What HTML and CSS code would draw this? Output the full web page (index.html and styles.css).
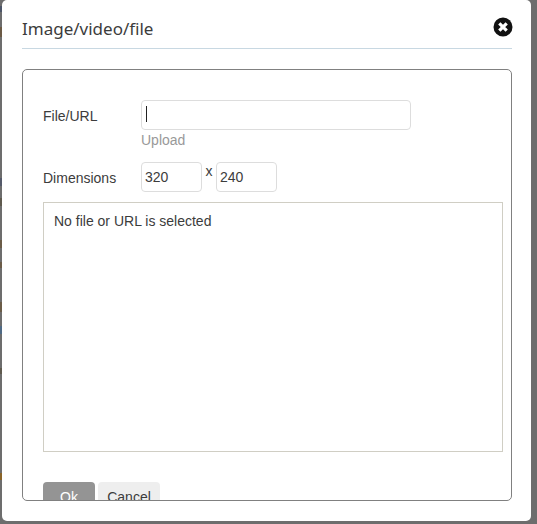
FILE: index.html
```html
<!DOCTYPE html>
<html lang="en">
<head>
    <meta charset="UTF-8">
    <title>Image/video/file</title>
    <link rel="stylesheet" href="styles.css">
</head>
<body>
    <div class="dialog">
        <div class="dialog-header">
            <div class="dialog-title">Image/video/file</div>
            <svg class="close-icon" width="20" height="20" viewBox="0 0 20 20">
                <circle cx="10" cy="10" r="9.5" fill="#111"/>
                <path d="M6.3 6.3L13.7 13.7M13.7 6.3L6.3 13.7" stroke="#fff" stroke-width="3.2"/>
            </svg>
        </div>
        <div class="panel">
            <div class="form-row">
                <label class="form-label">File/URL</label>
                <div class="form-field">
                    <div class="url-wrap">
                        <input type="text" class="input-field url-input">
                        <span class="caret"></span>
                    </div>
                    <a class="upload-link">Upload</a>
                </div>
            </div>
            <div class="form-row dimensions-row">
                <label class="form-label">Dimensions</label>
                <div class="dimensions">
                    <input type="text" class="input-field size-input" value="320">
                    <span class="times">x</span>
                    <input type="text" class="input-field size-input" value="240">
                </div>
            </div>
            <div class="preview">No file or URL is selected</div>
            <div class="buttons">
                <button class="button button-ok">Ok</button>
                <button class="button button-cancel">Cancel</button>
            </div>
        </div>
    </div>
</body>
</html>
```

FILE: styles.css
```css
html, body {
    height: 100%;
}
body {
    margin: 0;
    /* page behind the overlay only shows as a sliver on the left */
    background: linear-gradient(to bottom,
        #6d6d6d 6px, #4c5568 6px, #4c5568 12px, #6d6d6d 12px,
        #6d6d6d 27px, #6b5a45 27px, #6b5a45 37px, #6d6d6d 37px,
        #6d6d6d 178px, #555a6a 178px, #555a6a 186px, #6d6d6d 186px,
        #6d6d6d 198px, #5f5a4e 198px, #5f5a4e 206px, #6d6d6d 206px,
        #6d6d6d 240px, #6b5c48 240px, #6b5c48 248px, #6d6d6d 248px,
        #6d6d6d 262px, #6b5c48 262px, #6b5c48 268px, #6d6d6d 268px,
        #6d6d6d 302px, #6b5c48 302px, #6b5c48 312px, #6d6d6d 312px,
        #6d6d6d 326px, #4f6a85 326px, #4f6a85 334px, #6d6d6d 334px,
        #6d6d6d 368px, #5f5a4e 368px, #5f5a4e 374px, #6d6d6d 374px,
        #6d6d6d 473px, #8a6428 473px, #8a6428 480px, #6d6d6d 480px) no-repeat left top / 2px 100%, #6d6d6d;
    font-family: "Liberation Sans", Arial, sans-serif;
    font-size: 14px;
    color: #3c3c3c;
    overflow: hidden;
}
.dialog {
    width: 529px;
    height: 521px;
    margin-left: 2px;
    padding: 0 19px 0 20px;
    box-sizing: border-box;
    background: white;
    border-radius: 5px;
}
.dialog-header {
    height: 49px;
    box-sizing: border-box;
    border-bottom: 1px solid #c8d8e2;
    display: flex;
    justify-content: space-between;
    align-items: flex-start;
}
.dialog-title {
    font-family: "Noto Sans", sans-serif;
    font-size: 17px;
    line-height: 24px;
    margin-top: 17px;
    color: #3c3c3c;
}
.close-icon {
    margin-top: 17px;
    margin-right: -1px;
}
.panel {
    height: 432px;
    margin-top: 20px;
    padding: 30px 8px 0 20px;
    box-sizing: border-box;
    border: 1px solid #808080;
    border-radius: 5px;
    overflow: hidden;
}
.form-row {
    display: flex;
}
.form-label {
    width: 98px;
    padding-top: 8px;
    line-height: 16px;
}
.url-wrap {
    position: relative;
    height: 30px;
}
.input-field {
    height: 30px;
    padding: 0 3px;
    box-sizing: border-box;
    border: 1px solid #ddd;
    border-radius: 4px;
    font-family: "Liberation Sans", Arial, sans-serif;
    font-size: 14px;
    color: #3c3c3c;
    outline: none;
}
.url-input {
    width: 270px;
}
.caret {
    position: absolute;
    left: 5px;
    top: 6px;
    width: 1px;
    height: 16px;
    background: #222;
}
.upload-link {
    display: block;
    margin-top: 2px;
    line-height: 16px;
    color: #999;
}
.dimensions-row {
    margin-top: 14px;
}
.dimensions-row .form-label {
    padding-top: 8px;
}
.dimensions {
    display: flex;
    align-items: flex-start;
}
.size-input {
    width: 61px;
}
.times {
    width: 14px;
    text-align: center;
    line-height: 16px;
    margin-top: 1px;
}
.preview {
    height: 250px;
    margin-top: 10px;
    padding: 10px;
    box-sizing: border-box;
    border: 1px solid #d0cec4;
    line-height: 16px;
}
.buttons {
    display: flex;
    gap: 3px;
    margin-top: 30px;
}
.button {
    height: 30px;
    padding: 0;
    border: none;
    border-radius: 4px;
    font-family: "Liberation Sans", Arial, sans-serif;
    font-size: 14px;
}
.button-ok {
    width: 52px;
    background: #949494;
    color: white;
}
.button-cancel {
    width: 62px;
    background: #eee;
    color: #3c3c3c;
}
```
